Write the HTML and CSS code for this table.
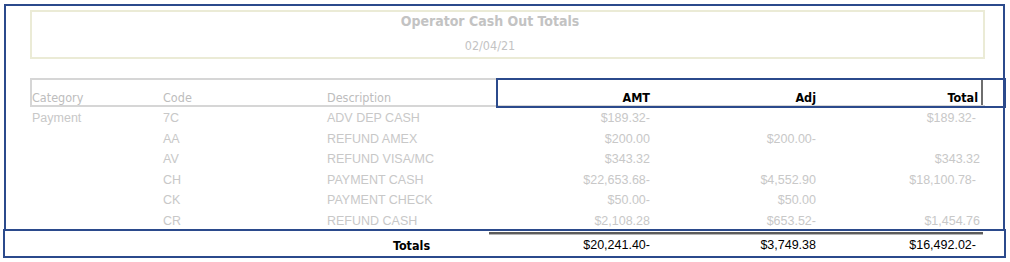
FILE: index.html
```html
<!DOCTYPE html>
<html>
<head>
<meta charset="utf-8">
<link rel="stylesheet" href="styles.css">
</head>
<body>
<div class="page">
  <div class="frame">
    <div class="title-box">
      <div class="title">Operator Cash Out Totals</div>
      <div class="date">02/04/21</div>
    </div>
    <div class="report">
      <div class="row head">
        <div class="cell">Category</div>
        <div class="cell">Code</div>
        <div class="cell">Description</div>
        <div class="cell num strong">AMT</div>
        <div class="cell num strong">Adj</div>
        <div class="cell num strong last">Total</div>
      </div>
      <div class="row data">
        <div class="cell">Payment</div>
        <div class="cell">7C</div>
        <div class="cell">ADV DEP CASH</div>
        <div class="cell num">$189.32-</div>
        <div class="cell num"></div>
        <div class="cell num tneg">$189.32-</div>
      </div>
      <div class="row data">
        <div class="cell"></div>
        <div class="cell">AA</div>
        <div class="cell">REFUND AMEX</div>
        <div class="cell num">$200.00</div>
        <div class="cell num">$200.00-</div>
        <div class="cell num"></div>
      </div>
      <div class="row data">
        <div class="cell"></div>
        <div class="cell">AV</div>
        <div class="cell">REFUND VISA/MC</div>
        <div class="cell num">$343.32</div>
        <div class="cell num"></div>
        <div class="cell num">$343.32</div>
      </div>
      <div class="row data">
        <div class="cell"></div>
        <div class="cell">CH</div>
        <div class="cell">PAYMENT CASH</div>
        <div class="cell num">$22,653.68-</div>
        <div class="cell num">$4,552.90</div>
        <div class="cell num tneg">$18,100.78-</div>
      </div>
      <div class="row data">
        <div class="cell"></div>
        <div class="cell">CK</div>
        <div class="cell">PAYMENT CHECK</div>
        <div class="cell num">$50.00-</div>
        <div class="cell num">$50.00</div>
        <div class="cell num"></div>
      </div>
      <div class="row data">
        <div class="cell"></div>
        <div class="cell">CR</div>
        <div class="cell">REFUND CASH</div>
        <div class="cell num">$2,108.28</div>
        <div class="cell num">$653.52-</div>
        <div class="cell num">$1,454.76</div>
      </div>
    </div>
    <div class="highlight"></div>
  </div>
  <div class="totals">
    <div class="rule"></div>
    <div class="cell"></div>
    <div class="cell"></div>
    <div class="cell label">Totals</div>
    <div class="cell num">$20,241.40-</div>
    <div class="cell num">$3,749.38</div>
    <div class="cell num tneg">$16,492.02-</div>
  </div>
</div>
</body>
</html>
```

FILE: styles.css
```css
* { box-sizing: border-box; }

html, body {
  margin: 0;
  padding: 0;
  background: #ffffff;
}

.page {
  width: 1010px;
  height: 262px;
  --cols: 131px 164px 169px 157px 166px 164px;
}

.frame {
  position: relative;
  margin: 4px 0 0 4px;
  width: 1001px;
  height: 225px;
  border: 2px solid #2b4a8c;
  border-bottom: none;
  padding: 4px 0 0 24px;
}

.title-box {
  width: 955px;
  height: 49px;
  border: 2px solid #ebebd6;
  padding-right: 35px;
  text-align: center;
  font-family: "DejaVu Sans Condensed", "DejaVu Sans", sans-serif;
  color: #c3c3c3;
}

.title {
  font-weight: bold;
  font-size: 14px;
  line-height: 18px;
}

.date {
  margin-top: 7px;
  font-size: 12.5px;
  line-height: 18px;
}

.report {
  margin-top: 19px;
  width: 955px;
}

.row {
  display: grid;
  grid-template-columns: var(--cols);
}

.head {
  height: 29px;
  border: 2px solid #d6d6d6;
  border-right: none;
  align-items: end;
  font-family: "DejaVu Sans Condensed", "DejaVu Sans", sans-serif;
  font-size: 12.5px;
  line-height: 14px;
  color: #bdbdbd;
}

.head .last {
  border-right: 2px solid #6e6e6e;
  height: 100%;
  display: flex;
  align-items: flex-end;
  justify-content: flex-end;
}

.strong {
  font-weight: bold;
  color: #000000;
}

.data {
  height: 20.6px;
  line-height: 22.6px;
  padding-left: 2px;
  font-family: "Liberation Sans", Arial, sans-serif;
  font-size: 12.5px;
  color: #c8c8c8;
  white-space: nowrap;
}

.num {
  text-align: right;
  padding-right: 3px;
}

.data .tneg, .totals .tneg {
  padding-right: 7px;
}

.highlight {
  position: absolute;
  left: 490px;
  top: 72px;
  width: 510px;
  height: 30px;
  border: 2px solid #2b4a8c;
}

.totals {
  margin-left: 3px;
  width: 1003px;
  height: 29px;
  border: 2px solid #2b4a8c;
  padding-left: 27px;
  display: grid;
  grid-template-columns: var(--cols);
  grid-template-rows: 4px 21px;
  font-family: "Liberation Sans", Arial, sans-serif;
  font-size: 12.5px;
  line-height: 21px;
  color: #000000;
}

.rule {
  grid-column: 4 / 7;
  grid-row: 1;
  margin-top: 1px;
  margin-left: -7px;
  border-top: 2px solid #5c5c5c;
  border-bottom: 1px solid #b5b5b5;
}

.totals .cell {
  grid-row: 2;
}

.totals .label {
  text-align: center;
  font-family: "DejaVu Sans Condensed", "DejaVu Sans", sans-serif;
  font-weight: bold;
  font-size: 12.5px;
}
```
